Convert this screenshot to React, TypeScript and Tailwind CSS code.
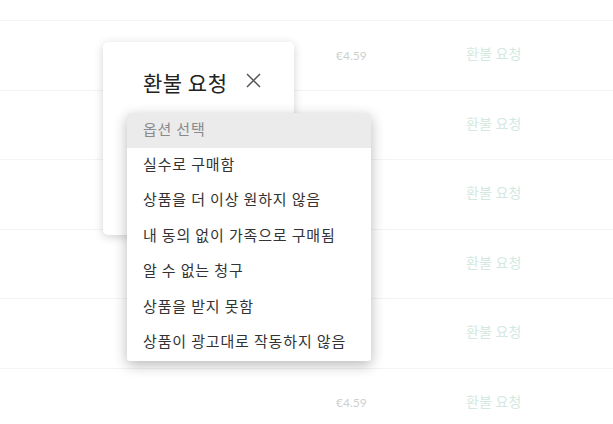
import React from "react";

const font = { fontFamily: '"Noto Sans CJK KR", "Noto Sans", sans-serif' };

const rows = [
  { price: "€4.59" },
  { price: "" },
  { price: "" },
  { price: "" },
  { price: "" },
  { price: "€4.59" },
];

const options = [
  "실수로 구매함",
  "상품을 더 이상 원하지 않음",
  "내 동의 없이 가족으로 구매됨",
  "알 수 없는 청구",
  "상품을 받지 못함",
  "상품이 광고대로 작동하지 않음",
];

export default function App() {
  return (
    <div className="relative w-[613px] h-[424px] overflow-hidden bg-white" style={font}>
      <div className="flex flex-col">
        <div className="h-[21px] border-b border-[#f4f4f4]" />
        {rows.map((r, i) => (
          <div
            key={i}
            className="grid grid-cols-[336px_130px_1fr] items-center h-[69.5px] border-b border-[#f4f4f4]"
          >
            <div />
            <div className="text-[12px] text-[#cfcfcf] pt-[1px]" style={{ fontFamily: 'Lato, "Noto Sans", sans-serif' }}>
              {r.price}
            </div>
            <div className="text-[14px] text-[#d3e9df] -mt-[3px] tracking-[0.2px]">환불 요청</div>
          </div>
        ))}
      </div>

      <div className="absolute left-[103px] top-[42px] w-[191px] h-[193px] bg-white rounded-[5px] shadow-[0_2px_10px_rgba(0,0,0,0.18)]">
        <div className="flex items-center pl-[40px] pt-[25px] gap-[19px]">
          <span className="text-[21px] leading-[30px] text-[#222] tracking-[0.5px]">환불 요청</span>
          <svg width="15" height="15" viewBox="0 0 15 15" className="mt-[-4px]">
            <path d="M1 1 L14 14 M14 1 L1 14" stroke="#555" strokeWidth="1.5" fill="none" />
          </svg>
        </div>
      </div>

      <div className="absolute left-[127px] top-[113px] w-[244px] bg-white rounded-[3px] shadow-[0_4px_14px_rgba(0,0,0,0.28)] overflow-hidden">
        <div className="h-[35px] flex items-center px-[16px] pb-[3px] bg-[#ebebeb] text-[15px] text-[#8a8a8a] tracking-[0.8px]">옵션 선택</div>
        {options.map((o) => (
          <div key={o} className="h-[35.5px] flex items-center px-[16px] pb-[4px] text-[15px] text-[#333] tracking-[0.85px]">
            {o}
          </div>
        ))}
      </div>
    </div>
  );
}
